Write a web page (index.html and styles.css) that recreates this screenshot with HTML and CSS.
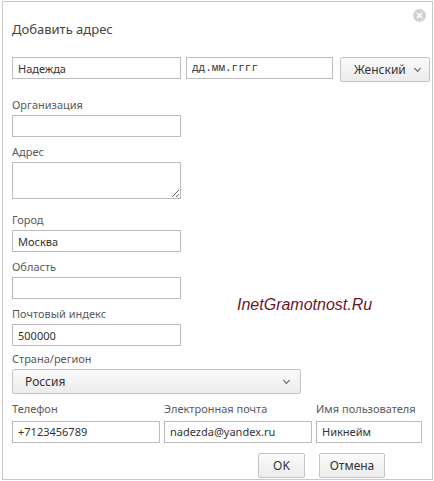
FILE: index.html
```html
<!DOCTYPE html>
<html lang="ru">
<head>
    <meta charset="UTF-8">
    <meta name="viewport" content="width=device-width, initial-scale=1.0">
    <title>Добавить адрес</title>
    <link rel="stylesheet" href="styles.css">
</head>
<body>
    <div class="dialog">
        <span class="close"><svg width="13" height="13" viewBox="0 0 13 13"><circle cx="6.5" cy="6.5" r="6.5" fill="#d2d2d2"/><path d="M4 4 L9 9 M9 4 L4 9" stroke="#fff" stroke-width="1.6"/></svg></span>
        <h1>Добавить адрес</h1>

        <div class="top-row">
            <input type="text" class="name" value="Надежда">
            <input type="text" class="date" placeholder="дд.мм.гггг">
            <div class="select gender">Женский <span class="chev"></span></div>
        </div>

        <label>Организация</label>
        <input type="text" class="field">

        <label>Адрес</label>
        <textarea class="field area"></textarea>

        <label>Город</label>
        <input type="text" class="field" value="Москва">

        <label>Область</label>
        <input type="text" class="field">

        <label>Почтовый индекс</label>
        <input type="text" class="field" value="500000">

        <label class="country-label">Страна/регион</label>
        <div class="select country">Россия <span class="chev"></span></div>

        <div class="contact-row">
            <div class="col phone">
                <label>Телефон</label>
                <input type="text" value="+7123456789">
            </div>
            <div class="col email">
                <label>Электронная почта</label>
                <input type="text" value="nadezda@yandex.ru">
            </div>
            <div class="col nick">
                <label>Имя пользователя</label>
                <input type="text" value="Никнейм">
            </div>
        </div>

        <div class="buttons">
            <button class="btn ok">OK</button>
            <button class="btn cancel">Отмена</button>
        </div>

        <div class="watermark">InetGramotnost.Ru</div>
    </div>
</body>
</html>
```

FILE: styles.css
```css
body {
    margin: 0;
    background: #fff;
    font-family: "Noto Sans", "Open Sans", sans-serif;
}
.dialog {
    position: relative;
    margin: 1px 0 0 2px;
    width: 420px;
    height: 477px;
    border: 1px solid #c8c8c8;
    padding: 0 0 0 9px;
    display: flex;
    flex-direction: column;
    align-items: flex-start;
}
.close {
    position: absolute;
    top: 3px;
    right: 6px;
    width: 13px;
    height: 13px;
}
h1 {
    font-size: 13px;
    font-weight: normal;
    color: #444;
    margin: 19px 0 0 0;
    line-height: 16px;
}
input, textarea {
    box-sizing: border-box;
    height: 22px;
    border: 1px solid #bdbdbd;
    font-family: "Noto Sans", "Open Sans", sans-serif;
    font-size: 11px;
    color: #333;
    padding: 0 5px;
    margin: 0;
    outline: none;
}
.top-row {
    display: flex;
    align-items: flex-start;
    margin-top: 20px;
    width: 418px;
}
.name {
    width: 169px;
}
.date {
    width: 147px;
    margin-left: 5px;
    font-family: "Liberation Mono", monospace;
}
.date::placeholder {
    color: #333;
}
.select {
    box-sizing: border-box;
    height: 25px;
    border: 1px solid #c4c4c4;
    border-radius: 2px;
    background: linear-gradient(#fafafa, #ececec);
    font-size: 12px;
    color: #333;
    display: flex;
    align-items: center;
    justify-content: space-between;
}
.chev {
    width: 4px;
    height: 4px;
    border-right: 1px solid #555;
    border-bottom: 1px solid #555;
    transform: rotate(45deg);
    margin-top: -3px;
}
.gender {
    width: 90px;
    margin-left: 7px;
    padding: 0 9px 0 13px;
}
label {
    display: block;
    font-size: 11px;
    color: #5a5a5a;
    line-height: 14px;
    margin: 8px 0 3px 0;
}
.top-row + label {
    margin-top: 16px;
}
.field {
    width: 169px;
}
.area {
    height: 37px;
    resize: vertical;
}
.area + label {
    margin-top: 14px;
}
.country-label {
    margin-top: 6px;
}
.country {
    width: 289px;
    padding: 0 11px 0 12px;
}
.contact-row {
    display: flex;
    gap: 4px;
    margin-top: 5px;
}
.col label {
    margin-top: 3px;
}
.phone input, .email input {
    width: 148px;
}
.nick input {
    width: 106px;
}
.buttons {
    display: flex;
    gap: 14px;
    margin: 10px 0 0 246px;
}
.btn {
    box-sizing: border-box;
    height: 25px;
    border: 1px solid #c4c4c4;
    border-radius: 2px;
    background: linear-gradient(#fafafa, #ececec);
    font-family: "Noto Sans", "Open Sans", sans-serif;
    font-size: 12px;
    color: #333;
    padding: 0;
}
.ok {
    width: 47px;
}
.cancel {
    width: 66px;
}
.watermark {
    position: absolute;
    left: 234px;
    top: 294px;
    font-family: "Liberation Sans", Arial, sans-serif;
    font-style: italic;
    font-size: 16px;
    color: #6e1628;
}
```
